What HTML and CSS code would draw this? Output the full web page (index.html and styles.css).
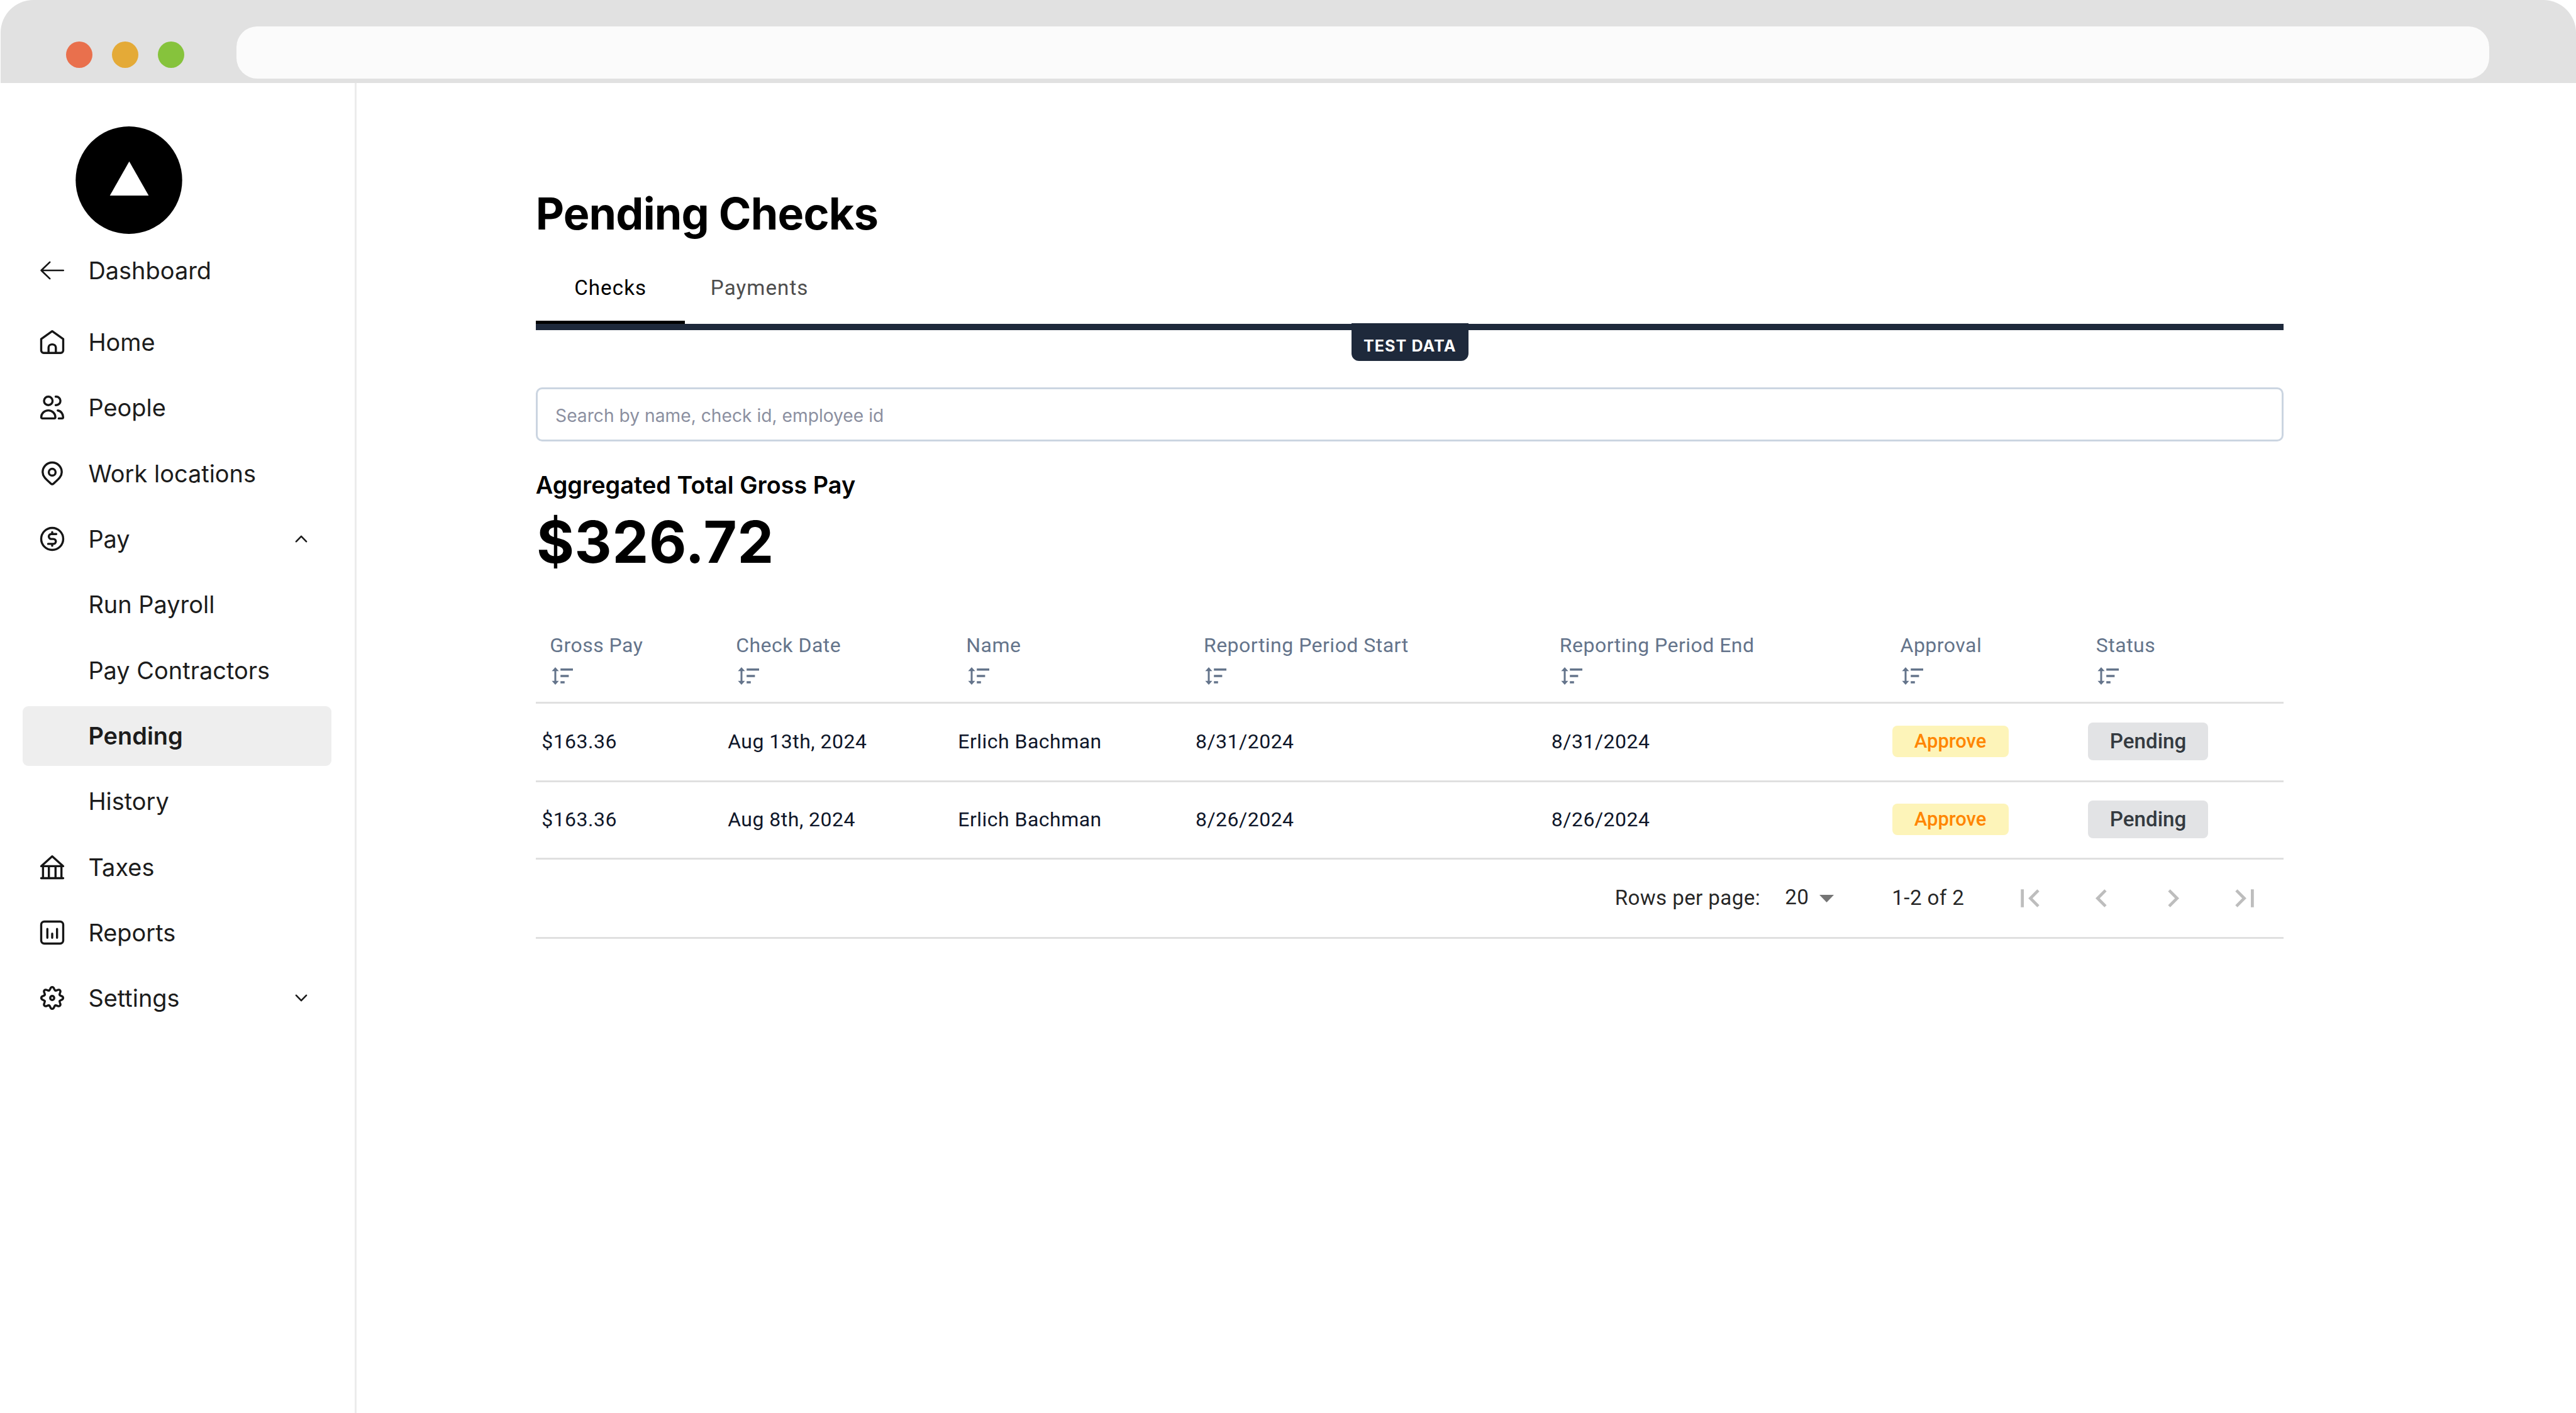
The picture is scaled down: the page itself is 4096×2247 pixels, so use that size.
FILE: index.html
```html
<!DOCTYPE html>
<html lang="en">
<head>
<meta charset="utf-8">
<title>Pending Checks</title>
<link rel="stylesheet" href="styles.css">
</head>
<body>
<svg class="sprite" aria-hidden="true">
  <symbol id="sort" viewBox="0 0 34.4 28">
    <path d="M6 0l5.6 6.2H7.5v15.6h4.1L6 28 .4 21.8h4.1V6.2H.4zM14.2 2.1h19.9v3.5H14.2zM14.2 12.2h13.200v3.500H14.200zM14.200 22.200h6.600v3.500h-6.600z"/>
  </symbol>
</svg>
<header class="chrome">
  <div class="lights"><i class="light red"></i><i class="light amber"></i><i class="light green"></i></div>
  <div class="address"></div>
</header>
<div class="app">
  <aside class="sidebar">
    <svg class="logo" viewBox="0 0 170 171"><ellipse cx="85" cy="85.5" rx="84.7" ry="85.5"/><path fill="#fff" d="M85.500 55.800l30.900 54.300H54.700z"/></svg>
    <a class="item back"><svg class="icon thin" viewBox="0 0 44 44"><path d="M39.700 22H4.600M18.200 8.900 4.600 22l13.600 13.100"/></svg><span>Dashboard</span></a>
    <nav class="nav">
      <a class="item"><svg class="icon" viewBox="0 0 44 44"><path d="M4.500 17.200 22 4.700l17.500 12.500v18a4 4 0 0 1-4 4h-27a4 4 0 0 1-4-4z"/><path d="M16.200 39.200v-8.400a5.800 5.200 0 0 1 11.600 0v8.400"/></svg><span>Home</span></a>
      <a class="item"><svg class="icon" viewBox="0 0 44 44"><circle cx="15.800" cy="11.500" r="6.800"/><path d="M27.500 4.700h.8a6.800 6.800 0 0 1 0 13.600h-.8M4.600 37.500c0-6 5-10.900 11.200-10.900S27 31.500 27 37.500c0 1.100-.8 1.900-1.900 1.900H6.500c-1.100 0-1.900-.8-1.900-1.900zM30.800 26.700c5 .6 8.600 5.500 8.600 10.800 0 1.100-.8 1.900-1.900 1.900h-5.100"/></svg><span>People</span></a>
      <a class="item"><svg class="icon" viewBox="0 0 44 44"><path d="M37.200 19.700c0 7.500-6.500 12.200-13.300 18.500a2.800 2.800 0 0 1-3.800 0C13.300 31.900 6.800 27.200 6.800 19.700a15.200 15.200 0 0 1 30.400 0z"/><circle cx="22" cy="19.900" r="5.400"/></svg><span>Work locations</span></a>
      <a class="item"><svg class="icon" viewBox="0 0 44 44"><circle cx="22" cy="22" r="17.500"/><path d="M28.500 14.300h-8a3.900 3.900 0 0 0 0 7.800h3.400a3.900 3.900 0 0 1 0 7.800h-8.400M22 11.300v3M22 29.900v3"/></svg><span>Pay</span><svg class="caret" viewBox="0 0 20 12"><path d="M2 10.200 10 1.800l8 8.400"/></svg></a>
      <a class="item sub"><span>Run Payroll</span></a>
      <a class="item sub"><span>Pay Contractors</span></a>
      <a class="item sub active"><span>Pending</span></a>
      <a class="item sub"><span>History</span></a>
      <a class="item"><svg class="icon" viewBox="0 0 44 44"><path d="M4.500 20.400 22 4.800l17.500 15.600zM4.500 39.500h35M7.400 20.400v19M16.700 20.400v19M27.300 20.400v19M36.700 20.400v19"/></svg><span>Taxes</span></a>
      <a class="item"><svg class="icon" viewBox="0 0 44 44"><rect x="4.500" y="4.500" width="35" height="35" rx="5"/><path d="M14.300 16.200v14.100M22 23.700v6.600M29.700 16.200v14.100"/></svg><span>Reports</span></a>
      <a class="item"><svg class="icon" viewBox="0 0 44 44"><g transform="translate(22 22)"><path id="tooth" d="M-4.940-11.900C-2.300-13-3.800-17.400 0-17.400S2.300-13 4.940-11.900"/><use href="#tooth" transform="rotate(45)"/><use href="#tooth" transform="rotate(90)"/><use href="#tooth" transform="rotate(135)"/><use href="#tooth" transform="rotate(180)"/><use href="#tooth" transform="rotate(225)"/><use href="#tooth" transform="rotate(270)"/><use href="#tooth" transform="rotate(315)"/><circle r="3.200"/></g></svg><span>Settings</span><svg class="caret" viewBox="0 0 20 12"><path d="M2 1.800l8 8.400 8-8.400"/></svg></a>
    </nav>
  </aside>
  <main class="content">
    <h1 class="title">Pending Checks</h1>
    <div class="tabs">
      <div class="tab selected">Checks</div>
      <div class="tab">Payments</div>
      <div class="badge">TEST DATA</div>
    </div>
    <div class="search">Search by name, check id, employee id</div>
    <div class="label">Aggregated Total Gross Pay</div>
    <div class="total">$326.72</div>
    <section class="table">
      <div class="row head">
        <div class="cell">Gross Pay<svg class="sort"><use href="#sort"/></svg></div>
        <div class="cell">Check Date<svg class="sort"><use href="#sort"/></svg></div>
        <div class="cell">Name<svg class="sort"><use href="#sort"/></svg></div>
        <div class="cell">Reporting Period Start<svg class="sort"><use href="#sort"/></svg></div>
        <div class="cell">Reporting Period End<svg class="sort"><use href="#sort"/></svg></div>
        <div class="cell">Approval<svg class="sort"><use href="#sort"/></svg></div>
        <div class="cell">Status<svg class="sort"><use href="#sort"/></svg></div>
      </div>
      <div class="row first">
        <div class="cell">$163.36</div><div class="cell">Aug 13th, 2024</div><div class="cell">Erlich Bachman</div><div class="cell">8/31/2024</div><div class="cell">8/31/2024</div>
        <div class="cell"><span class="pill approve">Approve</span></div><div class="cell"><span class="pill pending">Pending</span></div>
      </div>
      <div class="row">
        <div class="cell">$163.36</div><div class="cell">Aug 8th, 2024</div><div class="cell">Erlich Bachman</div><div class="cell">8/26/2024</div><div class="cell">8/26/2024</div>
        <div class="cell"><span class="pill approve">Approve</span></div><div class="cell"><span class="pill pending">Pending</span></div>
      </div>
      <div class="pager">
        <span class="per-page">Rows per page:</span>
        <span class="select"><span class="count">20</span><svg class="drop" viewBox="0 0 23 12"><path d="M0 0h23L11.500 12z"/></svg></span>
        <span class="range">1-2 of 2</span>
        <span class="step"><svg viewBox="0 0 24 24"><path d="M18.410 16.590 13.820 12l4.590-4.590L17 6l-6 6 6 6zM6 6h2v12H6z"/></svg></span>
        <span class="step"><svg viewBox="0 0 24 24"><path d="M15.410 16.590 10.830 12l4.580-4.590L14 6l-6 6 6 6z"/></svg></span>
        <span class="step"><svg viewBox="0 0 24 24"><path d="M8.590 16.590 13.170 12 8.590 7.410 10 6l6 6-6 6z"/></svg></span>
        <span class="step"><svg viewBox="0 0 24 24"><path d="M5.590 7.410 10.180 12l-4.590 4.590L7 18l6-6-6-6zM16 6h2v12h-2z"/></svg></span>
      </div>
    </section>
  </main>
</div>
</body>
</html>
```
FILE: styles.css
```css
* { box-sizing: border-box; }
body { margin: 0; width: 4096px; height: 2247px; display: flex; flex-direction: column; overflow: hidden; background: #fff; font-family: Inter, "Liberation Sans", sans-serif; }
.sprite { display: none; }

.chrome { flex: none; height: 132px; margin-left: 1px; padding: 41.5px 138px 0 104px; display: flex; background: #e1e1e1; border-radius: 52px 52px 0 0; }
.lights { width: 270.5px; padding-top: 24.5px; display: flex; gap: 31px; }
.light { width: 42px; height: 42px; border-radius: 50%; }
.red { background: #e9704d; }
.amber { background: #e4aa37; }
.green { background: #86c33c; }
.address { flex: 1; height: 83.5px; border-radius: 33px; background: #fbfbfb; }

.app { flex: 1; display: flex; }
.sidebar { width: 567px; border-right: 3px solid #ececec; padding: 68.5px 37px 0 36px; }
.logo { display: block; width: 170px; height: 171px; margin-left: 83.8px; }
.item { height: 95px; display: flex; align-items: center; padding: 0 38px 0 25.4px; border-radius: 9px; color: #1c1c1c; font-size: 37.95px; line-height: 46px; }
.item span { flex: 1; }
.back { margin-top: 10.5px; }
.nav { margin-top: 19.6px; display: flex; flex-direction: column; gap: 9.33px; }
.icon { width: 44px; height: 44px; margin-right: 35px; fill: none; stroke: #161616; stroke-width: 3.4; stroke-linecap: round; stroke-linejoin: round; }
.icon.thin { stroke-width: 2.7; }
.sub { padding-left: 104.4px; }
.active { background: #eee; font-weight: 600; }
.caret { width: 20px; height: 12px; fill: none; stroke: #1c1c1c; stroke-width: 2.6; stroke-linecap: round; stroke-linejoin: round; }

.content { width: 2779.3px; margin-left: 284.7px; padding-top: 167.8px; }
.title { margin: 0; font-size: 70px; line-height: 80px; font-weight: 700; letter-spacing: -.8px; color: #000; }
.tabs { position: relative; display: flex; margin-top: 20px; height: 125px; border-bottom: 10px solid #1e293b; font-family: Roboto, sans-serif; font-size: 33.2px; letter-spacing: 1.05px; color: #4d4d4d; }
.tab { width: 237px; height: 115px; display: flex; align-items: center; justify-content: center; padding-left: 1px; }
.selected { color: #000; padding-top: 5px; border-bottom: 5px solid #000; }
.badge { position: absolute; top: 114px; left: 50%; width: 186px; height: 60px; margin-left: -92.6px; padding-top: 12px; border-radius: 0 0 12px 12px; background: #1e293b; color: #fff; font: 700 25.1px/49px Inter, sans-serif; letter-spacing: 1.05px; text-align: center; }
.search { margin-top: 90.8px; height: 86px; padding: 2px 28.4px 0; border: 3px solid #cbd5e1; border-radius: 10px; color: #8b8fa0; font-size: 28.2px; line-height: 80px; }
.label { margin-top: 46.5px; font-size: 37.85px; line-height: 46px; font-weight: 600; color: #000; }
.total { margin: 12.7px 0 0 1.2px; font-size: 91.7px; line-height: 110px; font-weight: 700; letter-spacing: .7px; color: #000; }

.table { margin-top: 63px; font-family: Roboto, sans-serif; font-size: 32px; letter-spacing: .48px; color: #0f172a; }
.row { display: grid; grid-template-columns: 296px 366.1px 377.7px 565.9px 541.7px 311.3px 320.6px; height: 123.2px; align-items: center; border-bottom: 3px solid #e0e0e0; padding-bottom: 1.5px; }
.cell { padding-left: 9.5px; line-height: 40px; }
.head { height: 139px; align-items: start; padding-top: 25.8px; color: #64748b; }
.head .cell { padding-left: 22.5px; }
.first { height: 124.8px; }
.sort { display: block; width: 34.4px; height: 28px; margin: 15px 0 0 2.4px; fill: #64748b; }
.pill { display: flex; align-items: center; justify-content: center; border-radius: 8px; font-weight: 500; letter-spacing: 0; }
.approve { width: 185px; height: 49.4px; background: #fdf4b9; color: #ff8600; font-size: 30.9px; }
.pending { width: 191.5px; height: 60.4px; background: #e2e3e5; color: #343a40; font-size: 33.17px; }
.pager { height: 126px; display: flex; align-items: center; justify-content: flex-end; padding-right: 4.7px; border-bottom: 3px solid #e0e0e0; color: rgba(0, 0, 0, .87); font-size: 33.2px; letter-spacing: .36px; line-height: 40px; }
.per-page { width: 270.6px; }
.select { width: 170.1px; display: flex; align-items: center; }
.count { width: 54.5px; margin-top: -2px; }
.drop { width: 23px; height: 12px; margin-top: 2px; fill: #757575; }
.range { width: 162.4px; }
.step { width: 113.9px; display: flex; justify-content: center; }
.step svg { width: 57px; height: 57px; fill: #bdbdbd; }
```
